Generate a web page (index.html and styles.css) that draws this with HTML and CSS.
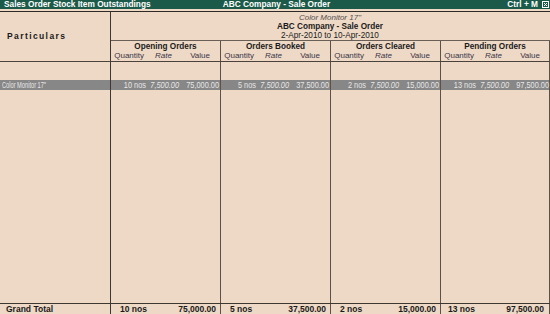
FILE: index.html
```html
<!DOCTYPE html>
<html>
<head>
<meta charset="utf-8">
<link rel="stylesheet" href="styles.css">
</head>
<body>
<div class="screen">
  <div class="titlebar">
    <span class="t-left">Sales Order Stock Item Outstandings</span>
    <span class="t-mid">ABC Company - Sale Order</span>
    <span class="t-right">Ctrl + M
      <svg class="closebox" width="7" height="7" viewBox="0 0 7 7"><rect x="0.5" y="0.5" width="6" height="6" fill="#1b5a49" stroke="#ffffff"/><path d="M2 2L5 5M5 2L2 5" stroke="#ffffff" stroke-width="1"/></svg>
    </span>
  </div>
  <div class="report">
    <div class="head">
      <div class="particulars">Particulars</div>
      <div class="head-right">
        <div class="info">
          <div class="info-item">Color Monitor 17"</div>
          <div class="info-co">ABC Company - Sale Order</div>
          <div class="info-date">2-Apr-2010 to 10-Apr-2010</div>
        </div>
        <div class="groups">
          <div class="group"><div class="g-title">Opening Orders</div><div class="sub"><span class="q">Quantity</span><span class="r">Rate</span><span class="v">Value</span></div></div>
          <div class="group"><div class="g-title">Orders Booked</div><div class="sub"><span class="q">Quantity</span><span class="r">Rate</span><span class="v">Value</span></div></div>
          <div class="group"><div class="g-title">Orders Cleared</div><div class="sub"><span class="q">Quantity</span><span class="r">Rate</span><span class="v">Value</span></div></div>
          <div class="group last"><div class="g-title">Pending Orders</div><div class="sub"><span class="q">Quantity</span><span class="r">Rate</span><span class="v">Value</span></div></div>
        </div>
      </div>
    </div>
    <div class="body">
      <div class="row spacer"><div class="cell"></div><div class="cell"></div><div class="cell"></div><div class="cell"></div><div class="cell last"></div></div>
      <div class="row hl">
        <div class="cell name"><span class="nm">Color Monitor 17"</span></div>
        <div class="cell nums"><span class="q"><i>10 nos</i></span><span class="r"><i>7,500.00</i></span><span class="v"><i>75,000.00</i></span></div>
        <div class="cell nums"><span class="q"><i>5 nos</i></span><span class="r"><i>7,500.00</i></span><span class="v"><i>37,500.00</i></span></div>
        <div class="cell nums"><span class="q"><i>2 nos</i></span><span class="r"><i>7,500.00</i></span><span class="v"><i>15,000.00</i></span></div>
        <div class="cell nums last"><span class="q"><i>13 nos</i></span><span class="r"><i>7,500.00</i></span><span class="v"><i>97,500.00</i></span></div>
      </div>
      <div class="row fill"><div class="cell"></div><div class="cell"></div><div class="cell"></div><div class="cell"></div><div class="cell last"></div></div>
    </div>
    <div class="row total">
      <div class="cell tname">Grand Total</div>
      <div class="cell tnums"><span class="tq">10 nos</span><span class="tv">75,000.00</span></div>
      <div class="cell tnums"><span class="tq">5 nos</span><span class="tv">37,500.00</span></div>
      <div class="cell tnums"><span class="tq">2 nos</span><span class="tv">15,000.00</span></div>
      <div class="cell tnums last"><span class="tq">13 nos</span><span class="tv">97,500.00</span></div>
    </div>
  </div>
</div>
</body>
</html>
```

FILE: styles.css
```css
* { box-sizing: border-box; }
html, body { margin: 0; padding: 0; }
body {
  width: 550px;
  height: 314px;
  overflow: hidden;
  background: #eed9c6;
  font-family: "Liberation Sans", Arial, sans-serif;
  color: #1a1a1a;
}
.screen {
  display: flex;
  flex-direction: column;
  height: 314px;
}
.titlebar {
  height: 9px;
  background: #1b5a49;
  color: #ffffff;
  font-weight: bold;
  font-size: 8.3px;
  line-height: 9px;
  display: grid;
  grid-template-columns: 1fr auto 1fr;
  padding: 0 1px 0 4px;
  white-space: nowrap;
}
.t-mid { text-align: center; }
.t-right {
  display: flex;
  justify-content: flex-end;
  align-items: center;
  gap: 4px;
}
.closebox { display: block; }
.report {
  margin-top: 2px;
  border-top: 1px solid #2e2a26;
  flex: 1;
  display: flex;
  flex-direction: column;
}
.head {
  height: 50px;
  display: flex;
  border-bottom: 1px solid #4a423b;
}
.particulars {
  width: 111px;
  border-right: 1px solid #3d3731;
  font-weight: bold;
  font-size: 8.5px;
  letter-spacing: 1.4px;
  padding: 20px 0 0 7px;
  line-height: 9px;
}
.head-right {
  width: 439px;
  display: flex;
  flex-direction: column;
}
.info {
  height: 30px;
  border-bottom: 1px solid #6a5f56;
  text-align: center;
  padding-top: 1px;
  padding-right: 1px;
}
.info-item {
  font-style: italic;
  font-size: 8px;
  line-height: 9px;
  color: #555050;
}
.info-co {
  font-weight: bold;
  font-size: 8.2px;
  line-height: 9.5px;
}
.info-date {
  font-size: 8.2px;
  line-height: 8.5px;
}
.groups {
  display: flex;
  flex: 1;
}
.group {
  width: 110px;
  border-right: 1px solid #5c5048;
  padding-top: 1px;
}
.group.last { width: 109px; }
.g-title {
  text-align: center;
  font-weight: bold;
  font-size: 8.2px;
  line-height: 9px;
}
.sub {
  display: flex;
  font-size: 8px;
  line-height: 10px;
  color: #3b3548;
}
.sub .q { width: 33px; text-align: right; }
.sub .r { width: 28px; text-align: right; font-style: italic; }
.sub .v { width: 38px; text-align: right; }
.body {
  flex: 1;
  display: flex;
  flex-direction: column;
}
.row {
  display: grid;
  grid-template-columns: 111px 110px 110px 110px 109px;
}
.cell { border-right: 1px solid #5c5048; }
.cell:first-child { border-right-color: #3d3731; }
.spacer { height: 18px; }
.fill { flex: 1; }
.hl {
  height: 10px;
  background: #878787;
  color: #e6e6e6;
  font-size: 9px;
  line-height: 10px;
  white-space: nowrap;
}
.name { overflow: hidden; padding-left: 2px; }
.nm {
  display: inline-block;
  transform: scaleX(0.63);
  transform-origin: left center;
}
.nums { display: flex; }
.nums span { display: flex; justify-content: flex-end; }
.nums i {
  font-style: normal;
  display: inline-block;
  transform: scaleX(0.82);
  transform-origin: right center;
}
.nums .r i { font-style: italic; }
.nums .q { width: 35px; }
.nums .r { width: 33px; }
.nums .v { width: 40px; }
.total {
  height: 11px;
  border-top: 1px solid #3d3731;
  font-weight: bold;
  font-size: 8.5px;
  line-height: 10px;
}
.tname { padding-left: 6px; }
.tnums {
  display: flex;
  justify-content: space-between;
  padding: 0 4px 0 9px;
}
.tnums.last { padding-right: 5px; padding-left: 7px; }
```
